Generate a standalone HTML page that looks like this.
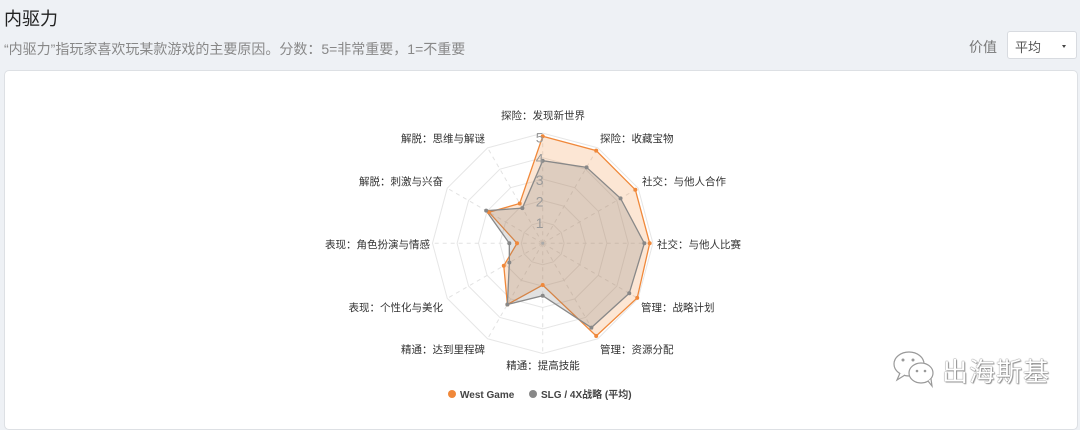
<!DOCTYPE html>
<html><head><meta charset="utf-8"><style>
body{margin:0;width:1080px;height:415px;background:#eef1f5;font-family:"Liberation Sans","Noto Sans CJK SC",sans-serif;position:relative;overflow:hidden}
.t{position:absolute;left:4px;top:5px;font-size:18px;color:#222}
.s{position:absolute;left:4px;top:39px;font-size:14px;color:#888}
.v{position:absolute;left:969px;top:37px;font-size:14px;color:#777}
.sel{position:absolute;left:1007px;top:31px;width:70px;height:28px;border:1px solid #d8dbe0;border-radius:3px;background:#fff;box-sizing:border-box;font-size:13px;color:#555;padding:5px 0 0 7px}
.sel:after{content:"";position:absolute;right:10px;top:13px;border:2.5px solid transparent;border-top:3px solid #444}
.card{position:absolute;left:4px;top:70px;width:1074px;height:360px;background:#fff;border:1px solid #dde0e4;border-radius:5px;box-sizing:border-box}
svg{position:absolute;left:0;top:0}
.wm{position:absolute;left:942px;top:352px;font-size:26px;color:#fff;letter-spacing:1px;text-shadow:0 0 1px #777,0 0 1px #777,1px 1px 1px #999}
</style></head><body>
<div class="t">内驱力</div>
<div class="s">“内驱力”指玩家喜欢玩某款游戏的主要原因。分数：5=非常重要，1=不重要</div>
<div class="v">价值</div>
<div class="sel">平均</div>
<div class="card"></div>
<svg id="c" width="1080" height="415" font-family="Liberation Sans, Noto Sans CJK SC, sans-serif"></svg>
<svg width="1080" height="415">
<g fill="#fff" stroke="#999" stroke-width="1.2">
<ellipse cx="909" cy="364" rx="15" ry="12"/>
<path d="M900 373 l-3 7 l8 -5"/>
<ellipse cx="921" cy="373" rx="12" ry="10"/>
<path d="M928 381 l4 5 l-1 -7"/>
</g>
<g fill="#999"><circle cx="903" cy="360" r="1.5"/><circle cx="913" cy="360" r="1.5"/><circle cx="917" cy="371" r="1.3"/><circle cx="925" cy="371" r="1.3"/></g>
</svg>
<div class="wm">出海斯基</div>
<script>
var cx=542.7,cy=243.3,u=21.4,s=document.getElementById('c'),h='';
function p(i,v){var a=(i*30-90)*Math.PI/180;return [cx+Math.cos(a)*v*u,cy+Math.sin(a)*v*u];}
for(var r=1;r<=5.15;r+=1){var pts=[];for(var i=0;i<12;i++)pts.push(p(i,r===5?5.15:r).join(','));h+='<polygon points="'+pts.join(' ')+'" fill="none" stroke="#e6e6e6"/>';}
for(var i=0;i<12;i++){var q=p(i,5.15);h+='<line x1="'+cx+'" y1="'+cy+'" x2="'+q[0]+'" y2="'+q[1]+'" stroke="#e2e2e2" stroke-dasharray="4,4"/>';}
var o=[5,5,5,5,5.1,5,1.95,3.3,2.1,1.2,2.9,2.15],g=[3.86,4.1,4.2,4.75,4.67,4.55,2.45,3.3,1.8,1.56,3.05,1.9];
function poly(d,f,st){var pts=[];for(var i=0;i<12;i++)pts.push(p(i,d[i]).join(','));return '<polygon points="'+pts.join(' ')+'" fill="'+f+'" stroke="'+st+'" stroke-width="1.3"/>';}
h+=poly(o,'rgba(240,140,60,0.22)','#f0883a');
h+=poly(g,'rgba(120,120,120,0.22)','#888');
for(var i=0;i<12;i++){var a=p(i,o[i]),b=p(i,g[i]);h+='<circle cx="'+a[0]+'" cy="'+a[1]+'" r="2" fill="#f0883a"/><circle cx="'+b[0]+'" cy="'+b[1]+'" r="2" fill="#888"/>';}
for(var r=1;r<=5;r++)h+='<text x="'+(cx-3)+'" y="'+(cy-r*u+6)+'" font-size="14" fill="#999" text-anchor="middle">'+r+'</text>';
h+='<circle cx="'+cx+'" cy="'+cy+'" r="1.5" fill="#aaa"/>';
var L=[['探险：发现新世界',543,119,'middle'],['探险：收藏宝物',600,142,'start'],['社交：与他人合作',642,185,'start'],['社交：与他人比赛',657,248,'start'],['管理：战略计划',641,311,'start'],['管理：资源分配',600,353,'start'],['精通：提高技能',543,369,'middle'],['精通：达到里程碑',485,353,'end'],['表现：个性化与美化',443,311,'end'],['表现：角色扮演与情感',430,248,'end'],['解脱：刺激与兴奋',443,185,'end'],['解脱：思维与解谜',485,142,'end']];
L.forEach(function(l){h+='<text x="'+l[1]+'" y="'+l[2]+'" font-size="10.5" fill="#333" text-anchor="'+l[3]+'">'+l[0]+'</text>';});
h+='<circle cx="452" cy="394" r="4" fill="#f0883a"/><text x="460" y="398" font-size="10" font-weight="bold" fill="#444">West Game</text>';
h+='<circle cx="533" cy="394" r="4" fill="#888"/><text x="541" y="398" font-size="10" font-weight="bold" fill="#444">SLG / 4X战略 (平均)</text>';
s.innerHTML=h;
</script>
</body></html>
